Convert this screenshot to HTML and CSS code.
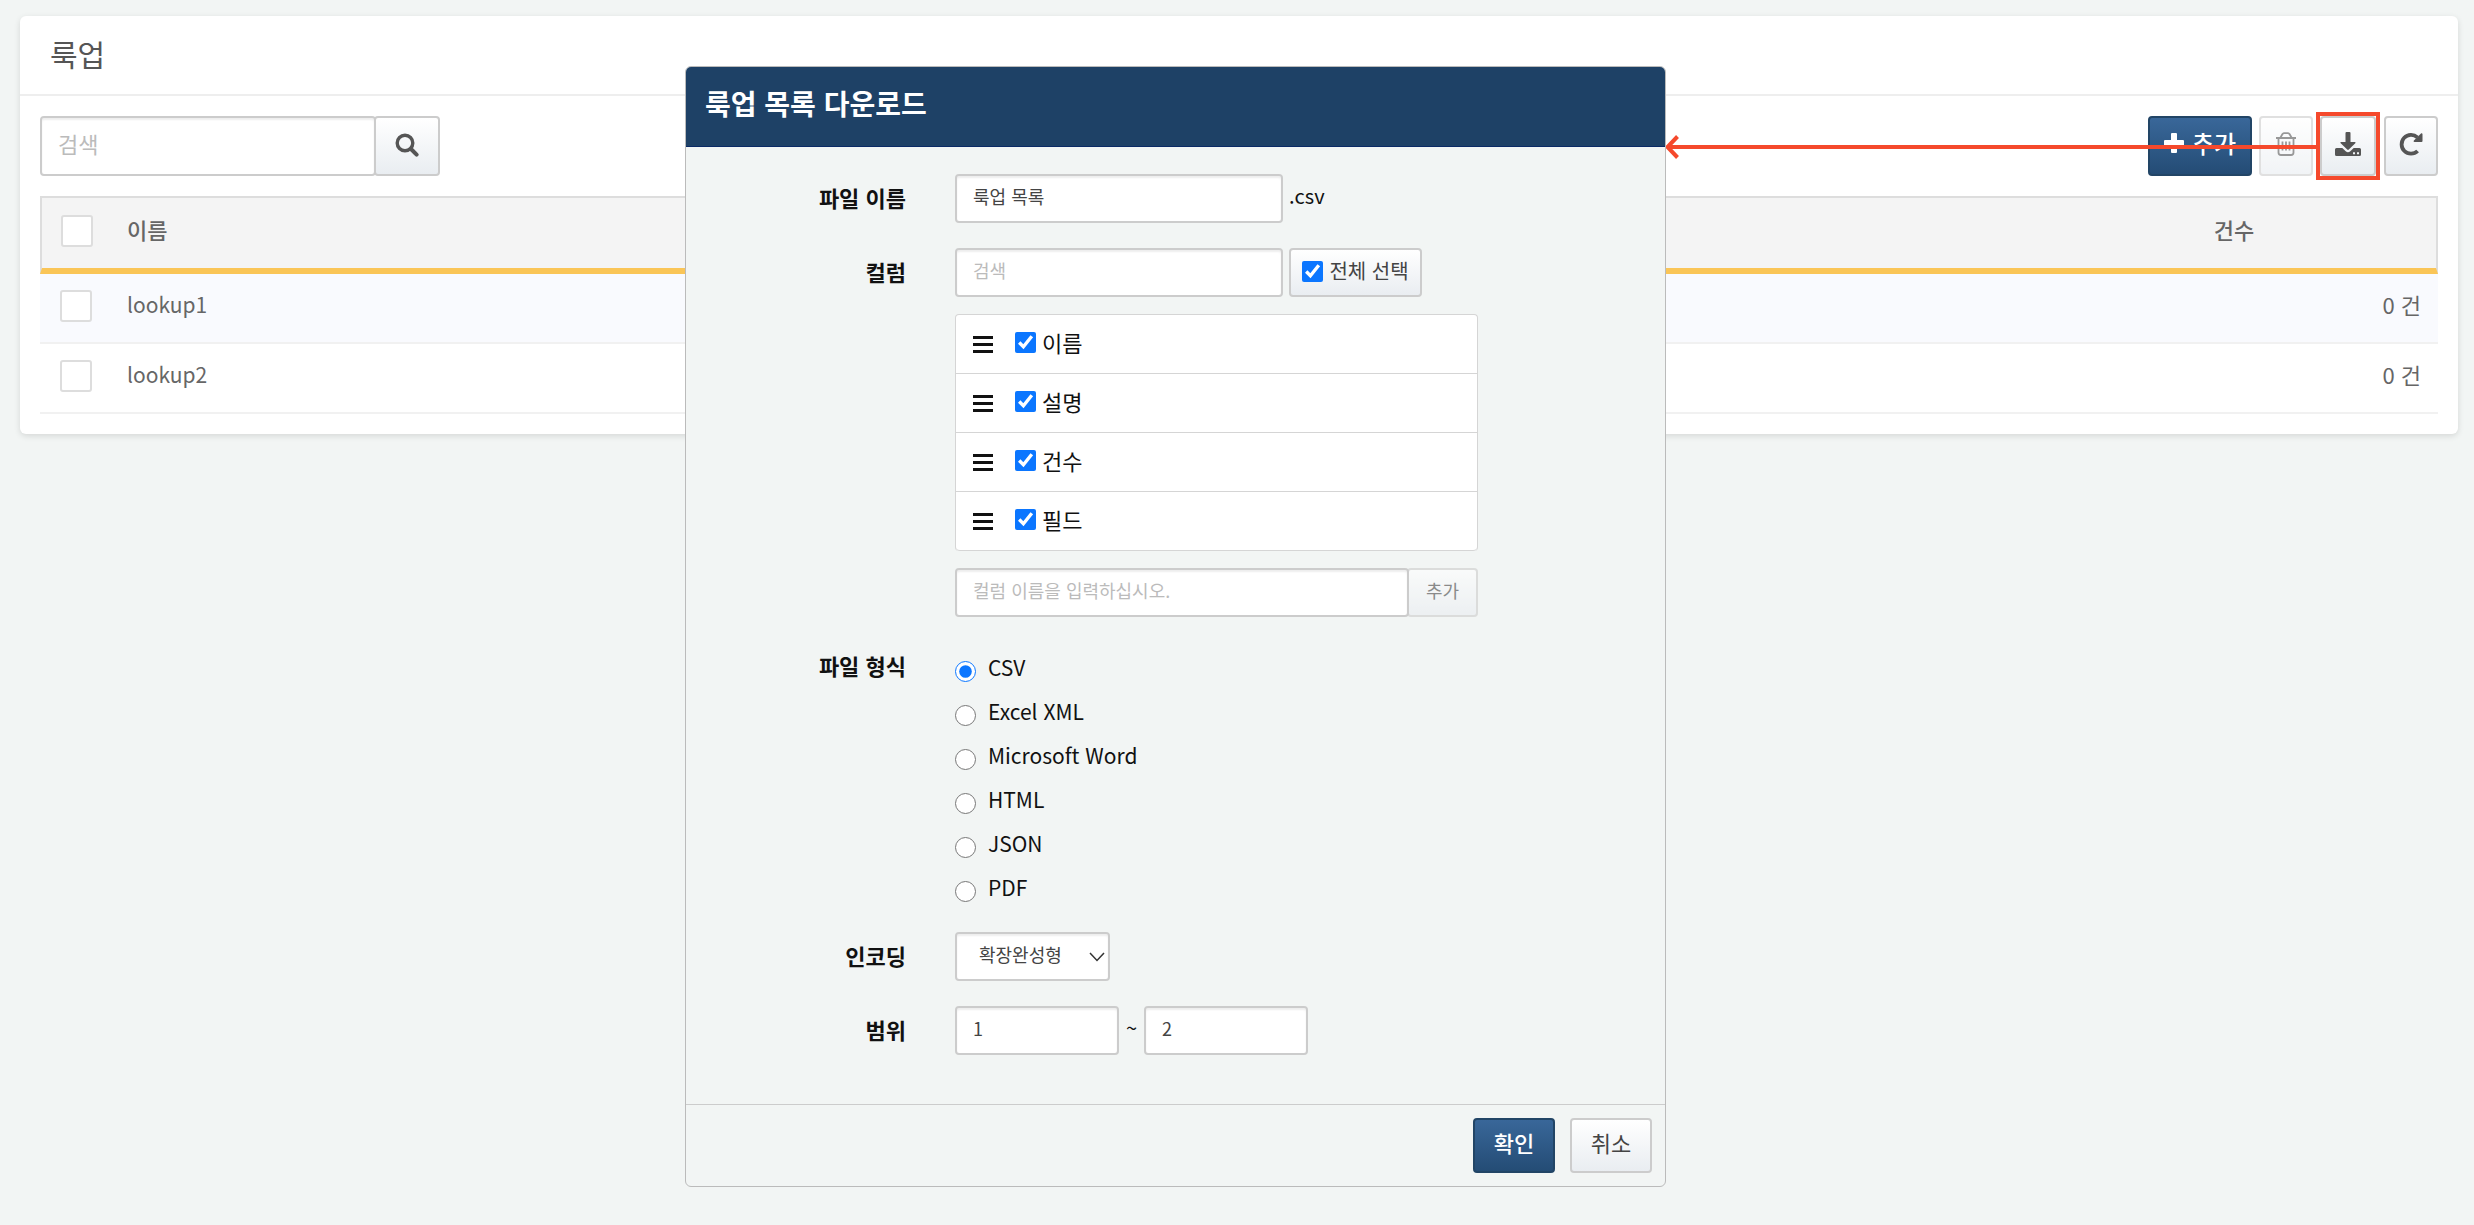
FILE: index.html
```html
<!DOCTYPE html>
<html lang="ko">
<head>
<meta charset="utf-8">
<title>룩업</title>
<link rel="stylesheet" href="styles.css">
</head>
<body>
<main class="panel">
  <h1 class="panel-title">룩업</h1>
  <div class="panel-body">
    <div class="toolbar">
      <form class="search">
        <input class="input input-lg" type="text" placeholder="검색" aria-label="검색">
        <button class="btn btn-icon btn-search" type="button" aria-label="검색">
          <svg width="24" height="24" viewBox="0 0 24 24" fill="none" stroke="currentColor" stroke-linecap="round"><circle cx="10" cy="10" r="7.8" stroke-width="3.4"/><path d="M16 16l5.6 5.6" stroke-width="4"/></svg>
        </button>
      </form>
      <div class="actions">
        <button class="btn btn-primary btn-add" type="button">
          <svg width="20" height="20" viewBox="0 0 20 20" fill="currentColor"><path d="M7 1a1 1 0 0 1 1-1h4a1 1 0 0 1 1 1v6h6a1 1 0 0 1 1 1v4a1 1 0 0 1-1 1h-6v6a1 1 0 0 1-1 1H8a1 1 0 0 1-1-1v-6H1a1 1 0 0 1-1-1V8a1 1 0 0 1 1-1h6z"/></svg>
          추가
        </button>
        <button class="btn btn-icon" type="button" aria-label="삭제" disabled>
          <svg width="22" height="24" viewBox="0 0 22 24" fill="none" stroke="currentColor" stroke-width="1.8"><path d="M1 6h20M3.5 6v14.500a2.500 2.500 0 0 0 2.500 2.500h10a2.500 2.500 0 0 0 2.500-2.500V6M5.500 5.500L7.500 2a2 2 0 0 1 1.500-.9h4a2 2 0 0 1 1.500.9l2 3.500M7.500 9.500v9M11 9.500v9M14.500 9.500v9"/></svg>
        </button>
        <div class="callout">
          <button class="btn btn-icon" type="button" aria-label="다운로드">
            <svg width="26" height="24" viewBox="0 0 26 24" fill="currentColor"><path d="M10.500 1a1 1 0 0 1 1-1h3a1 1 0 0 1 1 1v9h4.200c.8 0 1.100.7.600 1.300l-6.500 6.300a1.100 1.100 0 0 1-1.600 0L5.700 11.300c-.6-.6-.3-1.300.6-1.300h4.200z"/><path fill-rule="evenodd" d="M1.500 16h5.800l3.400 3.200a3.300 3.300 0 0 0 4.600 0l3.400-3.200h5.800A1.500 1.500 0 0 1 26 17.500v5a1.500 1.500 0 0 1-1.500 1.500h-23A1.500 1.500 0 0 1 0 22.500v-5A1.500 1.500 0 0 1 1.500 16zM18 20.200h2v2h-2zM22 20.200h2v2h-2z"/></svg>
          </button>
          <svg class="arrow" width="655" height="24" viewBox="0 0 655 24" fill="none" stroke="#f5492c"><path d="M3 12H655" stroke-width="4"/><path d="M12.500 1.500L2.500 12l10 10.500" stroke-width="4"/></svg>
        </div>
        <button class="btn btn-icon" type="button" aria-label="새로 고침">
          <svg width="24" height="24" viewBox="0 0 24 24"><path d="M18.600 19a9.400 9.400 0 1 1-.2-13.600" fill="none" stroke="currentColor" stroke-width="3.800"/><path d="M23.500 2.200V9a.9.9 0 0 1-.9.900h-7.100c-.9 0-1.200-.8-.6-1.400l7.100-7c.6-.6 1.500-.2 1.500.7z" fill="currentColor"/></svg>
        </button>
      </div>
    </div>
    <table class="grid">
      <thead>
        <tr><th class="col-check"><input class="box" type="checkbox" aria-label="전체 선택"></th><th class="col-name">이름</th><th class="col-count">건수</th></tr>
      </thead>
      <tbody>
        <tr><td class="col-check"><input class="box" type="checkbox" aria-label="lookup1"></td><td class="col-name">lookup1</td><td class="col-count">0 건</td></tr>
        <tr><td class="col-check"><input class="box" type="checkbox" aria-label="lookup2"></td><td class="col-name">lookup2</td><td class="col-count">0 건</td></tr>
      </tbody>
    </table>
  </div>
</main>

<section class="modal" role="dialog" aria-labelledby="modal-title">
  <h2 class="modal-title" id="modal-title">룩업 목록 다운로드</h2>
  <form class="modal-body">
    <div class="row">
      <label class="label" for="file-name">파일 이름</label>
      <div class="field line">
        <input class="input w-text" id="file-name" type="text" value="룩업 목록">
        <span>.csv</span>
      </div>
    </div>
    <div class="row">
      <label class="label" for="column-search">컬럼</label>
      <div class="field stack">
        <div class="line">
          <input class="input w-text" id="column-search" type="text" placeholder="검색">
          <label class="btn select-all"><input class="check" type="checkbox" checked>전체 선택</label>
        </div>
        <ul class="columns">
          <li><span class="handle"></span><label class="column"><input class="check" type="checkbox" checked>이름</label></li>
          <li><span class="handle"></span><label class="column"><input class="check" type="checkbox" checked>설명</label></li>
          <li><span class="handle"></span><label class="column"><input class="check" type="checkbox" checked>건수</label></li>
          <li><span class="handle"></span><label class="column"><input class="check" type="checkbox" checked>필드</label></li>
        </ul>
        <div class="add-column">
          <input class="input" type="text" placeholder="컬럼 이름을 입력하십시오." aria-label="컬럼 이름">
          <button class="btn btn-sm" type="button" disabled>추가</button>
        </div>
      </div>
    </div>
    <div class="row" role="radiogroup" aria-labelledby="format-label">
      <span class="label" id="format-label">파일 형식</span>
      <div class="field formats">
        <label><input type="radio" name="format" checked><span>CSV</span></label>
        <label><input type="radio" name="format"><span>Excel XML</span></label>
        <label><input type="radio" name="format"><span>Microsoft Word</span></label>
        <label><input type="radio" name="format"><span>HTML</span></label>
        <label><input type="radio" name="format"><span>JSON</span></label>
        <label><input type="radio" name="format"><span>PDF</span></label>
      </div>
    </div>
    <div class="row">
      <label class="label" for="encoding">인코딩</label>
      <div class="field select-wrap">
        <select class="input select" id="encoding"><option>확장완성형</option></select>
        <svg class="chevron" width="16" height="10" viewBox="0 0 16 10" fill="none" stroke="#333" stroke-width="1.500"><path d="M1 1l7 7.500L15 1"/></svg>
      </div>
    </div>
    <div class="row">
      <label class="label" for="range-from">범위</label>
      <div class="field line">
        <input class="input w-num" id="range-from" type="text" value="1">
        <span class="tilde">~</span>
        <input class="input w-num" type="text" value="2" aria-label="범위 끝">
      </div>
    </div>
  </form>
  <footer class="modal-footer">
    <button class="btn btn-primary btn-md" type="button">확인</button>
    <button class="btn btn-md" type="button">취소</button>
  </footer>
</section>
</body>
</html>
```
FILE: styles.css
```css
* { box-sizing: border-box; }

body {
  margin: 0;
  padding: 16px 16px 16px 20px;
  background: #f2f5f4;
  color: #111;
  font-family: "Noto Sans CJK KR", "Noto Sans", sans-serif;
  font-size: 20px;
  line-height: 28px;
}

input, button, select { font: inherit; margin: 0; }

/* Main panel */
.panel {
  background: #fff;
  border-radius: 6px;
  box-shadow: 0 2px 6px rgba(0, 0, 0, .12);
}
.panel-title {
  margin: 0;
  padding: 17px 30px 21px;
  border-bottom: 2px solid #eee;
  color: #555;
  font-size: 30px;
  font-weight: 400;
  line-height: 40px;
}
.panel-body { padding: 20px; }
.toolbar {
  display: flex;
  justify-content: space-between;
  margin-bottom: 20px;
}
.search { display: flex; }
.actions { display: flex; gap: 7px; }

/* Controls */
.input {
  height: 49px;
  padding: 0 16px 6px;
  border: 2px solid #ccc;
  border-radius: 4px;
  background: #fff;
  box-shadow: inset 0 2px 2px rgba(0, 0, 0, .07);
  color: #444;
  font-size: 18px;
}
.input::placeholder { color: #bbb; opacity: 1; }
.input-lg {
  width: 336px;
  height: 60px;
  font-size: 22px;
}
.btn {
  display: flex;
  align-items: center;
  justify-content: center;
  border: 2px solid #ccc;
  border-radius: 4px;
  background: linear-gradient(#fff, #e9edf1);
  color: #444;
}
.btn:disabled { opacity: .6; }
.btn-icon {
  width: 54px;
  height: 60px;
  padding: 0 0 5px;
  color: #555;
}
.btn-search { width: 66px; margin-left: -2px; padding: 0 0 2px; }
.btn-primary {
  border-color: #224566;
  background: linear-gradient(#396799, #244c75);
  color: #fff;
  font-weight: 500;
}
.btn-add {
  gap: 8px;
  width: 104px;
  height: 60px;
  padding: 0 0 6px;
  font-size: 24px;
}

/* Highlighted button with its pointer */
.callout {
  position: relative;
  margin: -4px -3px -4px -4px;
  border: 4px solid #f5492c;
}
.callout .btn-icon { width: 56px; }
.arrow {
  position: absolute;
  top: 19px;
  right: 100%;
}

/* Lookup table */
.grid {
  width: 100%;
  border-collapse: separate;
  border-spacing: 0;
  color: #666;
  font-size: 21px;
  text-align: left;
}
.grid th {
  height: 78px;
  padding: 0 0 8px;
  border-top: 2px solid #ddd;
  border-bottom: 6px solid #fac557;
  background: #f4f4f4;
  font-size: 22px;
  font-weight: 500;
}
.grid th:first-child { border-left: 2px solid #ddd; }
.grid th:last-child { border-right: 2px solid #ddd; text-align: center; }
.grid td {
  height: 70px;
  padding: 0 0 9px;
  border-bottom: 2px solid #f1f1f1;
}
.grid tbody tr:first-child td { background: #f9fafe; }
.grid .col-check { width: 87px; padding: 0 0 4px 20px; }
.grid th.col-check { padding-left: 19px; }
.grid .col-count { width: 406px; }
.grid td.col-count { padding-right: 17px; font-size: 22px; text-align: right; }
.box {
  display: block;
  appearance: none;
  width: 32px;
  height: 32px;
  border: 2px solid #ddd;
  border-radius: 3px;
  background: #fff;
}

/* Download dialog */
.modal {
  position: absolute;
  top: 66px;
  right: 808px;
  width: 981px;
  border: 1px solid #bbb;
  border-radius: 6px;
  background: #f2f5f4;
  overflow: hidden;
}
.modal-title {
  margin: -1px -1px 0;
  padding: 17px 20px 23px;
  border-bottom: 1px solid #0a2a66;
  background: #1e4166;
  color: #fff;
  font-size: 28px;
  font-weight: 700;
  line-height: 40px;
}
.modal-body {
  display: flex;
  flex-direction: column;
  gap: 25px;
  padding: 27px 30px 49px;
}
.row {
  display: grid;
  grid-template-columns: 190px 1fr;
  gap: 49px;
}
.label {
  padding-top: 6px;
  font-size: 22px;
  font-weight: 700;
  line-height: 34px;
  text-align: right;
}
.line { display: flex; gap: 6px; line-height: 44px; }
.stack { display: flex; flex-direction: column; gap: 17px; }
.w-text { width: 328px; }
.w-num { width: 164px; }
.tilde { width: 13px; text-align: center; }
.check {
  width: 21px;
  height: 21px;
  accent-color: #0b76ff;
}
.select-all {
  gap: 6px;
  width: 133px;
  height: 49px;
  padding-bottom: 3px;
  line-height: 28px;
}
.columns {
  width: 523px;
  margin: 0;
  padding: 0;
  border: 1px solid #d5d5d5;
  border-bottom: 0;
  border-radius: 4px;
  background: #fff;
  list-style: none;
}
.columns li {
  display: flex;
  align-items: center;
  gap: 22px;
  height: 59px;
  padding-left: 17px;
  border-bottom: 1px solid #d5d5d5;
}
.columns li:last-child { border-radius: 0 0 4px 4px; }
.handle {
  width: 20px;
  height: 17px;
  border: solid #111;
  border-width: 3px 0;
  background: linear-gradient(#111, #111) center / 100% 3px no-repeat;
}
.column {
  display: flex;
  align-items: center;
  gap: 6px;
  padding-bottom: 4px;
  font-size: 22px;
}
.add-column { display: flex; width: 523px; }
.add-column .input { flex: 1; }
.btn-sm {
  width: 71px;
  margin-left: -2px;
  padding: 0 0 6px;
  font-size: 18px;
}
.formats {
  display: flex;
  flex-direction: column;
  gap: 16px;
  padding: 12px 0 5px;
  font-size: 21px;
}
.formats label {
  display: flex;
  align-items: flex-end;
  gap: 12px;
}
.formats input {
  width: 21px;
  height: 21px;
  accent-color: #0b76ff;
}
.formats span { padding-bottom: 2px; line-height: 26px; }
.select-wrap { position: relative; width: 155px; }
.select {
  appearance: none;
  width: 155px;
  padding-left: 22px;
}
.chevron {
  position: absolute;
  top: 20px;
  right: 5px;
  pointer-events: none;
}
.modal-footer {
  display: flex;
  justify-content: flex-end;
  gap: 15px;
  padding: 13px 13px;
  border-top: 1px solid #ccc;
}
.btn-md {
  width: 82px;
  height: 55px;
  padding: 0 0 8px;
  font-size: 22px;
}
```
